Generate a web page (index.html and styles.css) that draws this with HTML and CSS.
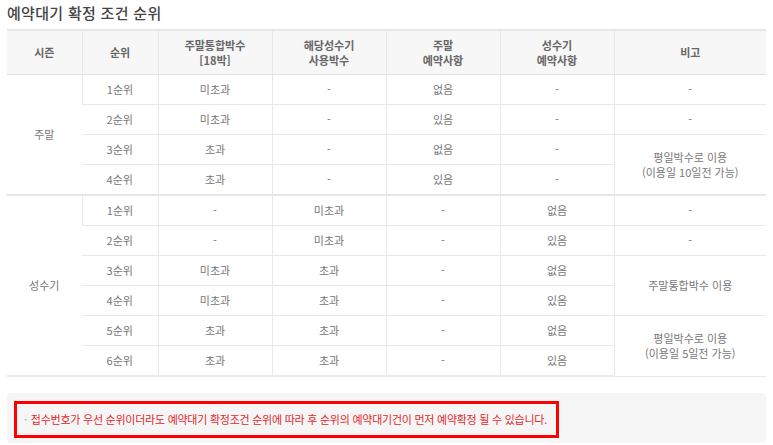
FILE: index.html
```html
<!DOCTYPE html>
<html lang="ko">
<head>
<meta charset="utf-8">
<link rel="stylesheet" href="styles.css">
</head>
<body>
<div class="page">
  <h2 class="title">예약대기 확정 조건 순위</h2>
  <table class="rank">
    <colgroup>
      <col class="c1"><col class="c2"><col class="c3"><col class="c3"><col class="c3"><col class="c3"><col class="c7">
    </colgroup>
    <thead>
      <tr>
        <th>시즌</th>
        <th>순위</th>
        <th>주말통합박수<br>[18박]</th>
        <th>해당성수기<br>사용박수</th>
        <th>주말<br>예약사항</th>
        <th>성수기<br>예약사항</th>
        <th>비고</th>
      </tr>
    </thead>
    <tbody>
      <tr><td rowspan="4">주말</td><td>1순위</td><td>미초과</td><td>-</td><td>없음</td><td>-</td><td>-</td></tr>
      <tr><td>2순위</td><td>미초과</td><td>-</td><td>있음</td><td>-</td><td>-</td></tr>
      <tr><td>3순위</td><td>초과</td><td>-</td><td>없음</td><td>-</td><td rowspan="2">평일박수로 이용<br>(이용일 10일전 가능)</td></tr>
      <tr><td>4순위</td><td>초과</td><td>-</td><td>있음</td><td>-</td></tr>
    </tbody>
    <tbody class="group2">
      <tr><td rowspan="6">성수기</td><td>1순위</td><td>-</td><td>미초과</td><td>-</td><td>없음</td><td>-</td></tr>
      <tr><td>2순위</td><td>-</td><td>미초과</td><td>-</td><td>있음</td><td>-</td></tr>
      <tr><td>3순위</td><td>미초과</td><td>초과</td><td>-</td><td>없음</td><td rowspan="2">주말통합박수 이용</td></tr>
      <tr><td>4순위</td><td>미초과</td><td>초과</td><td>-</td><td>있음</td></tr>
      <tr><td>5순위</td><td>초과</td><td>초과</td><td>-</td><td>없음</td><td rowspan="2">평일박수로 이용<br>(이용일 5일전 가능)</td></tr>
      <tr><td>6순위</td><td>초과</td><td>초과</td><td>-</td><td>있음</td></tr>
    </tbody>
  </table>
  <div class="note">
    <p class="note-text"><span class="dot">·</span>접수번호가 우선 순위이더라도 예약대기 확정조건 순위에 따라 후 순위의 예약대기건이 먼저 예약확정 될 수 있습니다.</p>
  </div>
</div>
</body>
</html>
```

FILE: styles.css
```css
html, body {
  margin: 0;
  padding: 0;
  background: #fff;
}
body {
  font-family: "Noto Sans CJK KR", "Noto Sans", sans-serif;
  color: #777;
}
.page {
  padding: 0 7px;
}
.title {
  margin: 0;
  padding-top: 3px;
  height: 26px;
  font-size: 15px;
  line-height: 20px;
  font-weight: 500;
  color: #444;
  letter-spacing: 0.3px;
}
.rank {
  width: 759px;
  border-collapse: collapse;
  table-layout: fixed;
  font-size: 11px;
}
.c1 { width: 75px; }
.c2 { width: 76px; }
.c3 { width: 114px; }
.c7 { width: 152px; }
.rank thead tr {
  border-top: 2px solid #e6e6e6;
}
.rank th {
  background: #f7f7f7;
  height: 43px;
  padding: 0;
  font-weight: 700;
  color: #666;
  line-height: 15px;
  border-left: 1px solid #e6e6e6;
  border-bottom: 1px solid #e3e3e3;
}
.rank td {
  height: 29px;
  padding: 0;
  text-align: center;
  line-height: 15px;
  border-left: 1px solid #e8e8e8;
  border-bottom: 1px solid #e8e8e8;
}
.rank th:first-child,
.rank td:first-child {
  border-left: none;
}
.rank .group2 tr:first-child td {
  border-top: 2px solid #e6e6e6;
}
.rank .group2 tr:first-child td + td {
  border-left: 1px solid #e8e8e8;
}
.rank .group2 tr:last-child td,
.rank .group2 td[rowspan="6"] {
  border-bottom: 2px solid #ebebeb;
}
.group2 tr td[rowspan="6"] {
  border-left: none;
}
.note {
  margin-top: 16px;
  background: #f6f6f6;
  border-radius: 4px;
  height: 50px;
  padding: 8px 7px 0;
  box-sizing: border-box;
}
.note-text {
  margin: 0;
  display: inline-block;
  border: 3px solid #f00;
  width: 545px;
  height: 37px;
  box-sizing: border-box;
  padding: 0 0 0 7px;
  line-height: 31px;
  font-size: 11px;
  letter-spacing: -0.25px;
  color: #e5262a;
  white-space: nowrap;
}
.dot {
  color: #999;
  margin-right: 4px;
}
```
